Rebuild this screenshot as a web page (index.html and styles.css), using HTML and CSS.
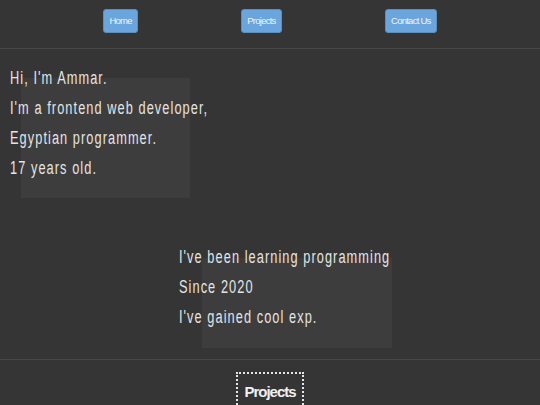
FILE: index.html
```html
<!DOCTYPE html>
<html>
<head>
<meta charset="utf-8">
<link rel="stylesheet" href="styles.css">
</head>
<body>
<header class="top">
  <nav class="nav">
    <a class="btn" href="#">Home</a>
    <a class="btn" href="#">Projects</a>
    <a class="btn" href="#">Contact Us</a>
  </nav>
</header>
<main>
  <section class="about">
    <div class="intro">
      <p>Hi, I'm Ammar.</p>
      <p>I'm a frontend web developer,</p>
      <p>Egyptian programmer.</p>
      <p>17 years old.</p>
    </div>
    <div class="learn">
      <p>I've been learning programming</p>
      <p>Since 2020</p>
      <p>I've gained cool exp.</p>
    </div>
  </section>
  <section class="projects">
    <h2 class="title">Projects</h2>
  </section>
</main>
</body>
</html>
```
FILE: styles.css
```css
* { box-sizing: border-box; }
html, body { margin: 0; padding: 0; }
body {
  background: #353535;
  color: #e4e4e4;
  font-family: "Liberation Sans", Arial, sans-serif;
  width: 540px;
  height: 405px;
  overflow: hidden;
}
.top {
  height: 49px;
  border-bottom: 1px solid #474747;
}
.nav {
  display: flex;
  justify-content: space-evenly;
  padding-top: 9px;
}
.btn {
  display: block;
  height: 24px;
  line-height: 22px;
  padding: 0 5px;
  background: #6aa6dd;
  border: 1px solid #5a8fc0;
  border-radius: 3px;
  color: #eef4fb;
  font-size: 9.5px;
  letter-spacing: -0.75px;
  text-decoration: none;
}
.about {
  height: 311px;
  border-bottom: 1px solid #474747;
  padding-top: 14px;
}
.about p {
  margin: 0;
  font-size: 18px;
  line-height: 30px;
  letter-spacing: 1.5px;
  white-space: nowrap;
  position: relative;
  transform: scaleX(0.71);
  transform-origin: left center;
}
.intro {
  position: relative;
  margin-left: 10px;
  width: 230px;
}
.intro::before {
  content: "";
  position: absolute;
  left: 11px;
  top: 15px;
  width: 169px;
  height: 120px;
  background: #3d3d3d;
}
.learn {
  position: relative;
  margin-left: 179px;
  margin-top: 59px;
  width: 230px;
}
.learn::before {
  content: "";
  position: absolute;
  left: 23px;
  top: 16px;
  width: 190px;
  height: 90px;
  background: #3d3d3d;
}
.projects {
  display: flex;
  justify-content: center;
  padding-top: 12px;
}
.title {
  margin: 0;
  padding: 8px 6px;
  border: 2px dotted #e6e6e6;
  font-size: 15px;
  font-weight: bold;
  letter-spacing: -1px;
  line-height: 20px;
  color: #f0f0f0;
}
```
